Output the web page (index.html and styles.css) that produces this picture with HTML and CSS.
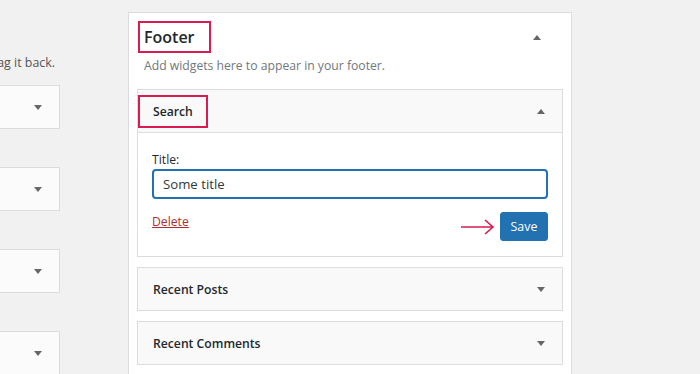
FILE: index.html
```html
<!DOCTYPE html>
<html lang="en">
<head>
  <meta charset="UTF-8" />
  <title>Widgets</title>
  <link rel="stylesheet" href="styles.css">
</head>
<body>
  <div class="layout">
    <div class="inactive">
      <div class="inactive-inner">
        <p class="inactive-note">Remove widgets here. You can always drag it back.</p>
        <div class="stub"><span class="caret down"></span></div>
        <div class="stub"><span class="caret down"></span></div>
        <div class="stub"><span class="caret down"></span></div>
        <div class="stub"><span class="caret down"></span></div>
      </div>
    </div>

    <div class="sidebar-panel">
      <div class="panel-head">
        <h2 class="panel-title mark">Footer</h2>
        <span class="caret up"></span>
      </div>
      <p class="panel-desc">Add widgets here to appear in your footer.</p>

      <div class="widget open">
        <div class="widget-top">
          <h3 class="widget-title mark">Search</h3>
          <span class="caret up"></span>
        </div>
        <div class="widget-inside">
          <label for="title">Title:</label>
          <input type="text" id="title" value="Some title">
          <div class="widget-actions">
            <a href="#" class="delete">Delete</a>
            <div class="save-wrap">
              <svg class="pointer" width="36" height="18" viewBox="0 0 36 18">
                <path d="M1 9 H33 M25 2 L33 9 L25 16" fill="none" stroke="#d81b50" stroke-width="1.6"/>
              </svg>
              <button type="button" class="save">Save</button>
            </div>
          </div>
        </div>
      </div>

      <div class="widget">
        <div class="widget-top">
          <h3 class="widget-title">Recent Posts</h3>
          <span class="caret down"></span>
        </div>
      </div>

      <div class="widget">
        <div class="widget-top">
          <h3 class="widget-title">Recent Comments</h3>
          <span class="caret down"></span>
        </div>
      </div>
    </div>
  </div>
</body>
</html>
```

FILE: styles.css
```css
* {
  box-sizing: border-box;
  margin: 0;
  padding: 0;
}

body {
  background-color: #f1f1f1;
  color: #23282d;
  font-family: "Open Sans", Arial, sans-serif;
  font-size: 12.2px;
  overflow: hidden;
}

.layout {
  display: flex;
  align-items: flex-start;
}

/* left column is cut off by the screenshot */
.inactive {
  width: 60px;
  overflow: hidden;
  flex-shrink: 0;
}

.inactive-inner {
  width: 500px;
  margin-left: -440px;
}

.inactive-note {
  color: #555;
  font-size: 12.4px;
  text-align: right;
  white-space: nowrap;
  padding-right: 5px;
  margin-top: 54px;
  line-height: 18px;
}

.stub {
  height: 44px;
  background: #fbfbfb;
  border: 1px solid #dcdcdc;
  margin-top: 13px;
  margin-bottom: 38px;
  display: flex;
  align-items: center;
  justify-content: flex-end;
  padding-right: 17px;
}

.stub + .stub {
  margin-top: 0;
}

.caret {
  width: 0;
  height: 0;
  border-left: 4px solid transparent;
  border-right: 4px solid transparent;
}

.caret.down {
  border-top: 5px solid #666;
}

.caret.up {
  border-bottom: 5px solid #666;
}

.sidebar-panel {
  margin-left: 68px;
  margin-top: 12px;
  width: 444px;
  min-height: 400px;
  background: #fff;
  border: 1px solid #dcdcdc;
  padding: 8px 8px 0;
}

.panel-head {
  display: flex;
  justify-content: space-between;
  align-items: center;
  padding-left: 1px;
  padding-right: 22px;
}

.mark {
  border: 2px solid #d81b50;
}

.panel-title {
  font-size: 16px;
  font-weight: 600;
  line-height: 28px;
  padding: 0 14px 0 4px;
}

.panel-desc {
  color: #72777c;
  padding-left: 7px;
  margin-top: 4px;
  line-height: 18px;
}

.widget {
  margin-top: 10px;
  border: 1px solid #dcdcdc;
  background: #f9f9f9;
}

.panel-desc + .widget {
  margin-top: 14px;
}

.widget-top {
  height: 42px;
  display: flex;
  justify-content: space-between;
  align-items: center;
  padding-right: 17px;
}

.widget-title {
  font-size: 12.2px;
  font-weight: 600;
  line-height: 29px;
  padding: 0 11px 0 15px;
}

.widget.open .widget-top {
  align-items: flex-start;
  padding-top: 5px;
}

.widget.open .widget-top .caret {
  margin-top: 14px;
}

.widget.open .widget-title {
  padding-left: 13px;
  padding-right: 13px;
}

.widget-inside {
  background: #fff;
  border-top: 1px solid #dcdcdc;
  padding: 18px 14px 15px 14px;
}

label {
  display: block;
  line-height: 17px;
}

input[type="text"] {
  display: block;
  width: 100%;
  height: 30px;
  margin-top: 1px;
  padding: 0 9px;
  font-family: inherit;
  font-size: 13.2px;
  color: #32373c;
  border: 2px solid #2271b1;
  border-radius: 4px;
  outline: none;
}

.widget-actions {
  display: flex;
  justify-content: space-between;
  align-items: center;
  margin-top: 13px;
}

.delete {
  color: #b32d2e;
  text-decoration: underline;
  margin-top: -11px;
}

.save-wrap {
  display: flex;
  align-items: center;
  gap: 4px;
}

.save {
  background: #2271b1;
  border: 1px solid #2271b1;
  color: #fff;
  font-family: inherit;
  font-size: 12.4px;
  border-radius: 3px;
  width: 48px;
  height: 29px;
  cursor: pointer;
}
```
